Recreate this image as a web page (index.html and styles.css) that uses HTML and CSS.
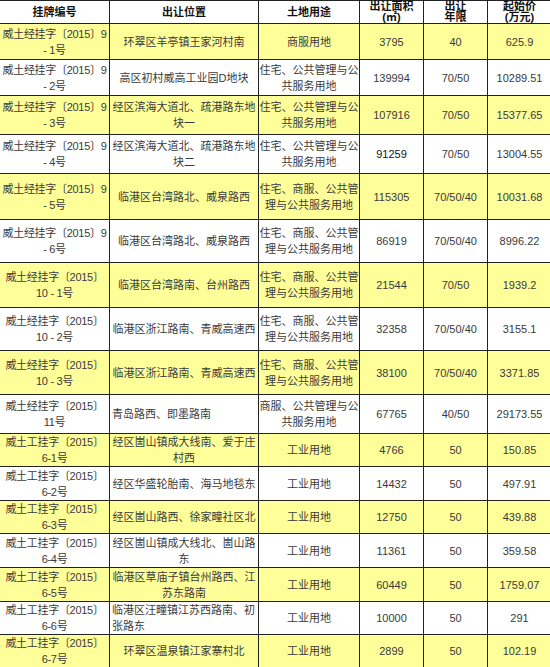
FILE: index.html
```html
<!DOCTYPE html>
<html lang="zh-CN">
<head>
<meta charset="utf-8">
<title>出让地块</title>
<link rel="stylesheet" href="styles.css">
</head>
<body>
<table class="land">
<colgroup>
<col class="c1"><col class="c2"><col class="c3"><col class="c4"><col class="c5"><col class="c6">
</colgroup>
<thead>
<tr class="head">
<th>挂牌编号</th><th>出让位置</th><th>土地用途</th><th>出让面积<br>(㎡)</th><th>出让<br>年限</th><th>起始价<br>(万元)</th>
</tr>
</thead>
<tbody>
<tr class="y r36"><td class="id">威土经挂字〔2015〕9<br>- 1号</td><td>环翠区羊亭镇王家河村南</td><td>商服用地</td><td>3795</td><td>40</td><td>625.9</td></tr>
<tr class="r36"><td class="id">威土经挂字〔2015〕9<br>- 2号</td><td>高区初村威高工业园D地块</td><td>住宅、公共管理与公<br>共服务用地</td><td>139994</td><td>70/50</td><td>10289.51</td></tr>
<tr class="y r39"><td class="id">威土经挂字〔2015〕9<br>- 3号</td><td>经区滨海大道北、疏港路东地<br>块一</td><td>住宅、公共管理与公<br>共服务用地</td><td>107916</td><td>70/50</td><td>15377.65</td></tr>
<tr class="r39"><td class="id">威土经挂字〔2015〕9<br>- 4号</td><td>经区滨海大道北、疏港路东地<br>块二</td><td>住宅、公共管理与公<br>共服务用地</td><td class="dark">91259</td><td>70/50</td><td>13004.55</td></tr>
<tr class="y r46"><td class="id">威土经挂字〔2015〕9<br>- 5号</td><td>临港区台湾路北、威泉路西</td><td>住宅、商服、公共管<br>理与公共服务用地</td><td>115305</td><td>70/50/40</td><td>10031.68</td></tr>
<tr class="r43"><td class="id">威土经挂字〔2015〕9<br>- 6号</td><td>临港区台湾路北、威泉路西</td><td>住宅、商服、公共管<br>理与公共服务用地</td><td>86919</td><td>70/50/40</td><td>8996.22</td></tr>
<tr class="y r45"><td class="id">威土经挂字〔2015〕<br>10 - 1号</td><td>临港区台湾路南、台州路西</td><td>住宅、商服、公共管<br>理与公共服务用地</td><td>21544</td><td>70/50</td><td>1939.2</td></tr>
<tr class="r43"><td class="id">威土经挂字〔2015〕<br>10 - 2号</td><td>临港区浙江路南、青威高速西</td><td>住宅、商服、公共管<br>理与公共服务用地</td><td>32358</td><td>70/50/40</td><td>3155.1</td></tr>
<tr class="y r44"><td class="id">威土经挂字〔2015〕<br>10 - 3号</td><td>临港区浙江路南、青威高速西</td><td>住宅、商服、公共管<br>理与公共服务用地</td><td>38100</td><td>70/50/40</td><td>3371.85</td></tr>
<tr class="r39"><td class="id">威土经挂字〔2015〕<br>11号</td><td class="left">青岛路西、即墨路南</td><td>商服、公共管理与公<br>共服务用地</td><td>67765</td><td>40/50</td><td>29173.55</td></tr>
<tr class="y r32"><td class="id">威土工挂字〔2015〕<br>6-1号</td><td>经区崮山镇成大线南、爱于庄<br>村西</td><td>工业用地</td><td>4766</td><td>50</td><td>150.85</td></tr>
<tr class="r34"><td class="id">威土工挂字〔2015〕<br>6-2号</td><td>经区华盛轮胎南、海马地毯东</td><td>工业用地</td><td>14432</td><td>50</td><td>497.91</td></tr>
<tr class="y r33"><td class="id">威土工挂字〔2015〕<br>6-3号</td><td>经区崮山路西、徐家疃社区北</td><td>工业用地</td><td>12750</td><td>50</td><td>439.88</td></tr>
<tr class="r34"><td class="id">威土工挂字〔2015〕<br>6-4号</td><td>经区崮山镇成大线北、崮山路<br>东</td><td>工业用地</td><td>11361</td><td>50</td><td>359.58</td></tr>
<tr class="y r34"><td class="id">威土工挂字〔2015〕<br>6-5号</td><td>临港区草庙子镇台州路西、江<br>苏东路南</td><td>工业用地</td><td>60449</td><td>50</td><td>1759.07</td></tr>
<tr class="r33"><td class="id">威土工挂字〔2015〕<br>6-6号</td><td class="left">临港区汪疃镇江苏西路南、初<br>张路东</td><td>工业用地</td><td>10000</td><td>50</td><td>291</td></tr>
<tr class="y r33"><td class="id">威土工挂字〔2015〕<br>6-7号</td><td>环翠区温泉镇江家寨村北</td><td>工业用地</td><td>2899</td><td>50</td><td>102.19</td></tr>
</tbody>
</table>
</body>
</html>
```
FILE: styles.css
```css
html, body {
  margin: 0;
  padding: 0;
  background: #ffffff;
  overflow: hidden;
}
body {
  font-family: "Liberation Sans", "Noto Sans CJK SC", sans-serif;
  font-size: 11px;
  color: #3a3a3a;
}
.land {
  border-collapse: collapse;
  table-layout: fixed;
  width: 552px;
  margin-left: -1px;
}
.c1 { width: 110px; }
.c2 { width: 149px; }
.c3 { width: 101px; }
.c4 { width: 64px; }
.c5 { width: 64px; }
.c6 { width: 64px; }
.land th,
.land td {
  border: 1px solid #222222;
  padding: 0;
  text-align: center;
  vertical-align: middle;
  white-space: nowrap;
}
.land td {
  line-height: 16px;
}
.land td.id {
  letter-spacing: -0.3px;
}
.head {
  height: 23px;
}
.land th {
  font-weight: bold;
  color: #111111;
  line-height: 11px;
  background: #ffffff;
}
.land td.left {
  text-align: left;
  padding-left: 2px;
}
.land td.dark {
  color: #111111;
}
.y td {
  background: #ffff99;
}
.r32 { height: 32px; }
.r33 { height: 33px; }
.r34 { height: 34px; }
.r36 { height: 36px; }
.r39 { height: 39px; }
.r43 { height: 43px; }
.r44 { height: 44px; }
.r45 { height: 45px; }
.r46 { height: 46px; }
```
